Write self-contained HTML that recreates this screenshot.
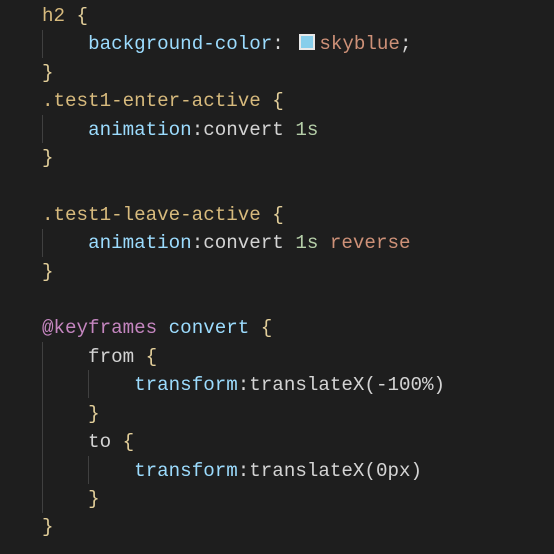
<!DOCTYPE html>
<html><head><style>
body{margin:0;background:#1e1e1e;width:554px;height:554px;overflow:hidden}
pre{margin:0;padding:2px 0 0 42px;font-family:"Liberation Mono",monospace;font-size:19.2px;line-height:28.4px;color:#d4d4d4;position:relative}
.s{color:#d7ba7d}.p{color:#9cdcfe}.v{color:#ce9178}.n{color:#b5cea8}.k{color:#c586c0}.b{color:#e3cf9a}
.g{position:absolute;width:1px;background:#404040}
.sw{display:inline-block;background:#87ceeb;border:2px solid #e8e8e8;box-sizing:border-box;margin:0 4px 0 4px;vertical-align:-1px;width:16px;height:16px}
</style></head><body>
<div class="g" style="left:42px;top:30px;height:28px"></div>
<div class="g" style="left:42px;top:115px;height:28px"></div>
<div class="g" style="left:42px;top:229px;height:28px"></div>
<div class="g" style="left:42px;top:342px;height:171px"></div>
<div class="g" style="left:88px;top:370px;height:28px"></div>
<div class="g" style="left:88px;top:456px;height:28px"></div>
<pre><span class="s">h2</span> <span class="b">{</span>
    <span class="p">background-color</span>: <span class="sw"></span><span class="v">skyblue</span>;
<span class="b">}</span>
<span class="s">.test1-enter-active</span> <span class="b">{</span>
    <span class="p">animation</span>:convert <span class="n">1s</span>
<span class="b">}</span>

<span class="s">.test1-leave-active</span> <span class="b">{</span>
    <span class="p">animation</span>:convert <span class="n">1s</span> <span class="v">reverse</span>
<span class="b">}</span>

<span class="k">@keyframes</span> <span class="p">convert</span> <span class="b">{</span>
    from <span class="b">{</span>
        <span class="p">transform</span>:translateX(-100%)
    <span class="b">}</span>
    to <span class="b">{</span>
        <span class="p">transform</span>:translateX(0px)
    <span class="b">}</span>
<span class="b">}</span></pre>
</body></html>
